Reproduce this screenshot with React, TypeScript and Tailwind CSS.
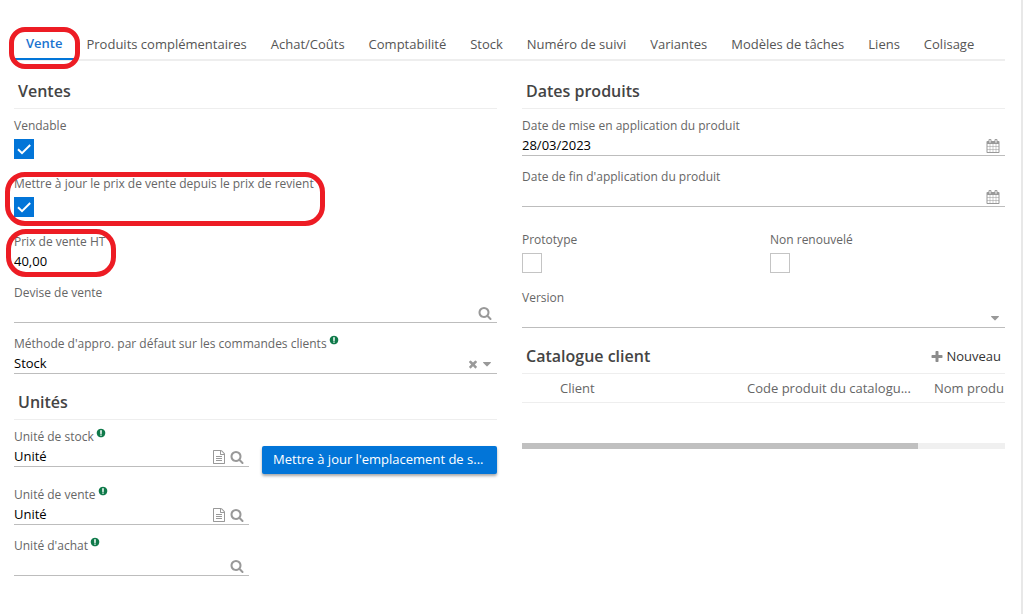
import { useId, useState } from "react";
import type { ReactNode } from "react";

const ICONS = {
  search:
    "M1216 832q0-185-131.5-316.5t-316.5-131.5-316.5 131.5-131.5 316.5 131.5 316.5 316.5 131.5 316.5-131.5 131.5-316.5zm512 832q0 52-38 90t-90 38q-54 0-90-38l-343-342q-179 124-399 124-143 0-273.5-55.5t-225-150-150-225-55.5-273.5 55.5-273.5 150-225 225-150 273.5-55.5 273.5 55.5 225 150 150 225 55.5 273.5q0 220-124 399l343 343q37 37 37 90z",
  times:
    "M1490 1322q0 40-28 68l-136 136q-28 28-68 28t-68-28l-294-294-294 294q-28 28-68 28t-68-28l-136-136q-28-28-28-68t28-68l294-294-294-294q-28-28-28-68t28-68l136-136q28-28 68-28t68 28l294 294 294-294q28-28 68-28t68 28l136 136q28 28 28 68t-28 68l-294 294 294 294q28 28 28 68z",
  plus: "M1600 736v192q0 40-28 68t-68 28h-416v416q0 40-28 68t-68 28h-192q-40 0-68-28t-28-68v-416h-416q-40 0-68-28t-28-68v-192q0-40 28-68t68-28h416v-416q0-40 28-68t68-28h192q40 0 68 28t28 68v416h416q40 0 68 28t28 68z",
  caret:
    "M1408 704q0 26-19 45l-448 448q-19 19-45 19t-45-19l-448-448q-19-19-19-45t19-45 45-19h896q26 0 45 19t19 45z",
  calendar:
    "M192 1664h288v-288h-288v288zm352 0h320v-288h-320v288zm-352-352h288v-320h-288v320zm352 0h320v-320h-320v320zm-352-384h288v-288h-288v288zm736 736h320v-288h-320v288zm-384-736h320v-288h-320v288zm768 736h288v-288h-288v288zm-384-352h320v-320h-320v320zm-352-864v-288q0-13-9.5-22.5t-22.5-9.5h-64q-13 0-22.5 9.5t-9.5 22.5v288q0 13 9.5 22.5t22.5 9.5h64q13 0 22.5-9.5t9.5-22.5zm736 864h288v-320h-288v320zm-384-384h320v-288h-320v288zm384 0h288v-288h-288v288zm32-480v-288q0-13-9.5-22.5t-22.5-9.5h-64q-13 0-22.5 9.5t-9.5 22.5v288q0 13 9.5 22.5t22.5 9.5h64q13 0 22.5-9.5t9.5-22.5zm384-64v1280q0 52-38 90t-90 38h-1408q-52 0-90-38t-38-90v-1280q0-52 38-90t90-38h128v-96q0-66 47-113t113-47h64q66 0 113 47t47 113v96h384v-96q0-66 47-113t113-47h64q66 0 113 47t47 113v96h128q52 0 90 38t38 90z",
  file: "M1596 380q28 28 48 76t20 88v1152q0 40-28 68t-68 28h-1344q-40 0-68-28t-28-68v-1600q0-40 28-68t68-28h896q40 0 88 20t76 48zm-444-244v376h376q-10-29-22-41l-313-313q-12-12-41-22zm384 1528v-1024h-416q-40 0-68-28t-28-68v-416h-768v1536h1280zm-1024-864q0-14 9-23t23-9h704q14 0 23 9t9 23v64q0 14-9 23t-23 9h-704q-14 0-23-9t-9-23v-64zm736 224q14 0 23 9t9 23v64q0 14-9 23t-23 9h-704q-14 0-23-9t-9-23v-64q0-14 9-23t23-9h704zm0 256q14 0 23 9t9 23v64q0 14-9 23t-23 9h-704q-14 0-23-9t-9-23v-64q0-14 9-23t23-9h704z",
  required:
    "M896 128q209 0 385.5 103t279.5 279.5 103 385.5-103 385.5-279.5 279.5-385.5 103-385.5-103-279.5-279.5-103-385.5 103-385.5 279.5-279.5 385.5-103zm128 1247v-190q0-14-9-23.5t-22-9.5h-192q-13 0-23 10t-10 23v190q0 13 10 23t23 10h192q13 0 22-9.5t9-23.5zm-2-344l18-621q0-12-10-18-10-8-24-8h-220q-14 0-24 8-10 6-10 18l17 621q0 10 10 17.5t24 7.5h185q14 0 23.5-7.5t10.5-17.5z",
};

type IconName = keyof typeof ICONS;

function Icon({ name, className = "size-3.5" }: { name: IconName; className?: string }) {
  return (
    <svg viewBox="0 0 1792 1792" fill="currentColor" aria-hidden="true" className={`shrink-0 overflow-visible ${className}`}>
      <path d={ICONS[name]} />
    </svg>
  );
}

function Highlight({ className }: { className: string }) {
  return <span aria-hidden="true" className={`pointer-events-none absolute z-10 border-5 border-[#ed1c24] ${className}`} />;
}

function FieldLabel({ id, required, children }: { id: string; required?: boolean; children: ReactNode }) {
  return (
    <label htmlFor={id} className="flex h-5 items-center gap-0.5 pt-0.5 text-xs whitespace-nowrap text-[#666]">
      {children}
      {required && <Icon name="required" className="mb-2 size-2.5 text-[#0f7a4a]" />}
    </label>
  );
}

const ACTION_LABELS: Partial<Record<IconName, string>> = {
  search: "Rechercher",
  file: "Ouvrir",
  calendar: "Choisir une date",
  times: "Effacer",
};

type FieldProps = {
  label: string;
  value?: string;
  required?: boolean;
  plain?: boolean;
  actions?: IconName[];
  children?: ReactNode;
};

function TextField({ label, value = "", required, plain, actions = [], children }: FieldProps) {
  const id = useId();
  return (
    <div className="relative">
      <FieldLabel id={id} required={required}>
        {label}
      </FieldLabel>
      <div className={`flex h-[21px] items-center gap-1 border-b pr-[5px] ${plain ? "border-transparent" : "border-[#bdbdbd]"}`}>
        <input id={id} type="text" defaultValue={value} className="h-5 min-w-0 flex-1 bg-transparent text-[13px] text-black outline-none" />
        {actions.map((name) => (
          <button key={name} type="button" aria-label={ACTION_LABELS[name]} className="pt-0.5 text-[#999]">
            <Icon name={name} />
          </button>
        ))}
      </div>
      {children}
    </div>
  );
}

function SelectField({ label, value = "", required }: FieldProps) {
  const id = useId();
  const [current, setCurrent] = useState(value);
  return (
    <div>
      <FieldLabel id={id} required={required}>
        {label}
      </FieldLabel>
      <div className="relative h-[21px] border-b border-[#bdbdbd]">
        <select
          id={id}
          value={current}
          onChange={(e) => setCurrent(e.target.value)}
          className="block h-5 w-full appearance-none bg-transparent pt-px text-[13px] text-black outline-none"
        >
          <option value=""></option>
          {value && <option value={value}>{value}</option>}
        </select>
        <span className="pointer-events-none absolute inset-y-0 right-[3px] flex items-center gap-px pt-0.5 text-[#999]">
          {current && (
            <button type="button" aria-label={ACTION_LABELS.times} onClick={() => setCurrent("")} className="pointer-events-auto">
              <Icon name="times" className="size-3" />
            </button>
          )}
          <Icon name="caret" />
        </span>
      </div>
    </div>
  );
}

function CheckField({ label, checked = false, children }: { label: string; checked?: boolean; children?: ReactNode }) {
  const id = useId();
  return (
    <div className="relative pb-1">
      <FieldLabel id={id}>{label}</FieldLabel>
      <div className="mt-1 grid size-5">
        <input
          id={id}
          type="checkbox"
          defaultChecked={checked}
          className="peer col-start-1 row-start-1 size-5 appearance-none border border-[#c4c4c4] bg-white checked:border-[#0275d8] checked:bg-[#0275d8]"
        />
        <svg
          viewBox="0 0 20 20"
          aria-hidden="true"
          className="pointer-events-none invisible col-start-1 row-start-1 size-5 fill-none stroke-white stroke-2 peer-checked:visible"
        >
          <path d="M4 10.2 L8 14.2 L16.2 6" />
        </svg>
      </div>
      {children}
    </div>
  );
}

function SectionTitle({ title, children }: { title: string; children?: ReactNode }) {
  return (
    <div className="flex h-9 items-center justify-between border-b border-[#eee] px-1">
      <h2 className="text-base font-semibold text-[#444]">{title}</h2>
      {children}
    </div>
  );
}

const TABS = [
  "Vente",
  "Produits complémentaires",
  "Achat/Coûts",
  "Comptabilité",
  "Stock",
  "Numéro de suivi",
  "Variantes",
  "Modèles de tâches",
  "Liens",
  "Colisage",
];

export default function App() {
  return (
    <div className="min-h-screen border-r-2 border-[#e8e8e8] bg-white pt-7 pr-4 pl-3.5 font-['Open_Sans','Noto_Sans',sans-serif]">
      <nav className="relative flex h-[33px] border-b-2 border-[#eee] text-[13px] whitespace-nowrap text-[#555]">
        {TABS.map((tab, i) =>
          i === 0 ? (
            <a key={tab} href="#" aria-current="page" className="relative flex h-8 items-center border-b-2 border-[#0275d8] px-3 pt-0.5 font-semibold text-[#1a73d0]">
              {tab}
              <Highlight className="-top-px -right-[6px] -bottom-[11px] -left-[5px] rounded-2xl" />
            </a>
          ) : (
            <a key={tab} href="#" className="flex h-8 items-center px-3 pt-0.5">
              {tab}
            </a>
          ),
        )}
      </nav>

      <main className="grid grid-cols-2 gap-x-[25px] pt-3">
        <div className="flex min-w-0 flex-col gap-2.5">
          <section>
            <SectionTitle title="Ventes" />
            <div className="flex flex-col gap-2.5 pt-1.5">
              <CheckField label="Vendable" checked />
              <CheckField label="Mettre à jour le prix de vente depuis le prix de revient" checked>
                <Highlight className="-top-px -bottom-[5px] -left-[9px] w-80 rounded-[20px]" />
              </CheckField>
              <TextField label="Prix de vente HT" value="40,00" plain>
                <Highlight className="-top-[2px] -bottom-[5px] -left-2 w-[110px] rounded-[20px]" />
              </TextField>
              <TextField label="Devise de vente" actions={["search"]} />
              <SelectField label="Méthode d'appro. par défaut sur les commandes clients" value="Stock" required />
            </div>
          </section>

          <section>
            <SectionTitle title="Unités" />
            <div className="grid grid-cols-2 gap-x-[13px] gap-y-2.5 pt-1.5">
              <TextField label="Unité de stock" value="Unité" required actions={["file", "search"]} />
              <button
                type="button"
                className="mt-5 h-7 min-w-0 truncate rounded-xs bg-[#0275d8] px-[11px] text-left text-[13px] text-white shadow-[0_2px_3px_rgba(0,0,0,0.35)]"
              >
                Mettre à jour l'emplacement de s...
              </button>
              <div className="col-start-1">
                <TextField label="Unité de vente" value="Unité" required actions={["file", "search"]} />
              </div>
              <div className="col-start-1">
                <TextField label="Unité d'achat" required actions={["search"]} />
              </div>
            </div>
          </section>
        </div>

        <div className="flex min-w-0 flex-col gap-2.5">
          <section>
            <SectionTitle title="Dates produits" />
            <div className="flex flex-col gap-2.5 pt-1.5">
              <TextField label="Date de mise en application du produit" value="28/03/2023" actions={["calendar"]} />
              <TextField label="Date de fin d'application du produit" actions={["calendar"]} />
              <div className="grid grid-cols-2 gap-x-[13px] pt-3">
                <CheckField label="Prototype" />
                <CheckField label="Non renouvelé" />
              </div>
              <SelectField label="Version" />
            </div>
          </section>

          <section>
            <SectionTitle title="Catalogue client">
              <button type="button" className="flex items-center gap-0.5 pt-0.5 text-[13px] text-[#333]">
                <Icon name="plus" className="size-3.5 text-[#8c8c8c]" />
                Nouveau
              </button>
            </SectionTitle>
            <div className="overflow-hidden">
              <table className="w-full table-fixed text-left text-[13px] text-[#666]">
                <thead>
                  <tr className="h-7 border-b border-[#eee]">
                    <th className="w-[34px]" aria-label="Sélection" />
                    <th className="truncate px-1 pt-0.5 font-normal">Client</th>
                    <th className="truncate px-1 pt-0.5 font-normal">Code produit du catalogu...</th>
                    <th className="w-[75px] overflow-hidden pt-0.5 pl-1 font-normal whitespace-nowrap">Nom produ</th>
                  </tr>
                </thead>
              </table>
            </div>
            <div className="mt-10 h-1.5 bg-[#f0f0f0]">
              <div className="h-full w-[82%] bg-[#c0c0c0]" />
            </div>
          </section>
        </div>
      </main>
    </div>
  );
}
